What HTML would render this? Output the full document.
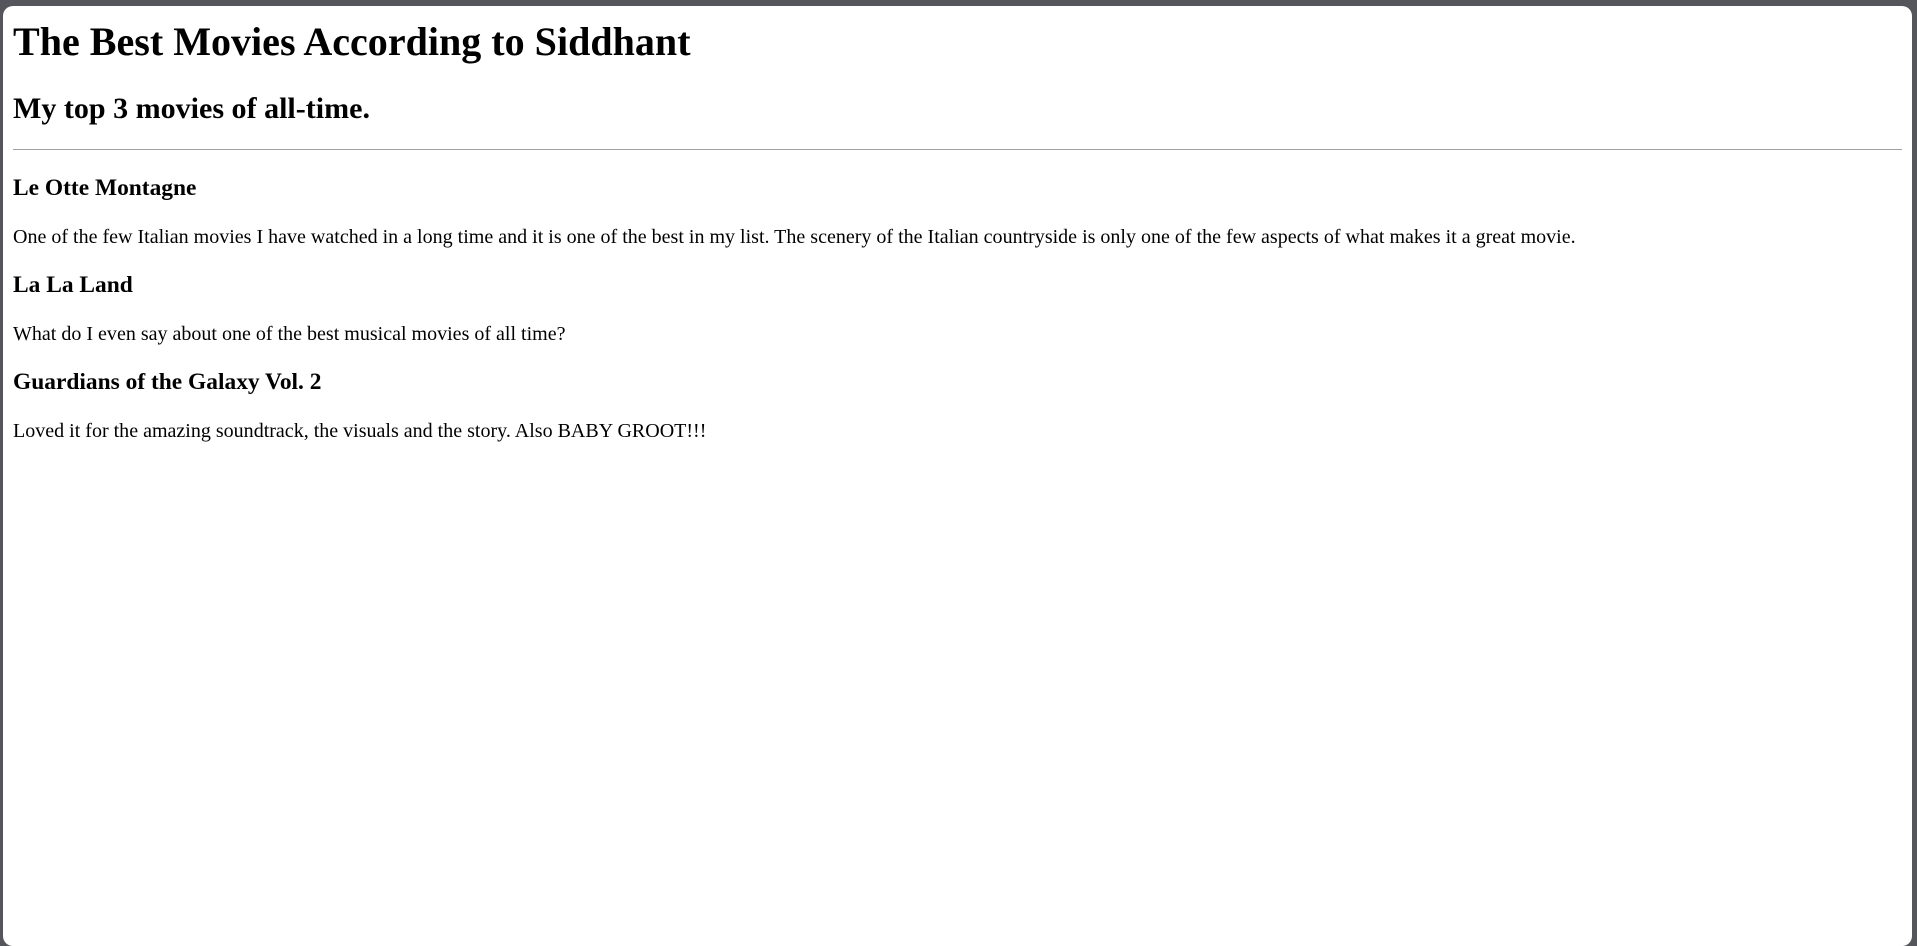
<!DOCTYPE html>
<html><head><meta charset="utf-8"><style>
html,body{margin:0;padding:0;background:#55565b;width:1917px;height:932px;overflow:hidden}
.card{position:absolute;left:3px;top:6px;width:1909px;height:940px;background:#fff;border-radius:10px;overflow:hidden}
.z{zoom:1.252;padding:0 8px;margin-top:-12px;display:flow-root;font-family:"Liberation Serif",serif;color:#000;font-size:16px}
h1{font-size:32px;margin:21.44px 0}
h2{font-size:24px;margin:19.92px 0 18.3px}
h3{font-size:18.72px;margin:18.72px 0}
p{margin:16px 0}
hr{border:0;border-top:0.8px solid #a0a0a0;margin:0 0 20.7px;height:0}
</style></head><body>
<div class="card"><div class="z">
<h1>The Best Movies According to Siddhant</h1>
<h2>My top 3 movies of all-time.</h2>
<hr>
<h3>Le Otte Montagne</h3>
<p>One of the few Italian movies I have watched in a long time and it is one of the best in my list. The scenery of the Italian countryside is only one of the few aspects of what makes it a great movie.</p>
<h3>La La Land</h3>
<p>What do I even say about one of the best musical movies of all time?</p>
<h3>Guardians of the Galaxy Vol. 2</h3>
<p>Loved it for the amazing soundtrack, the visuals and the story. Also BABY GROOT!!!</p>
</div></div>
</body></html>
